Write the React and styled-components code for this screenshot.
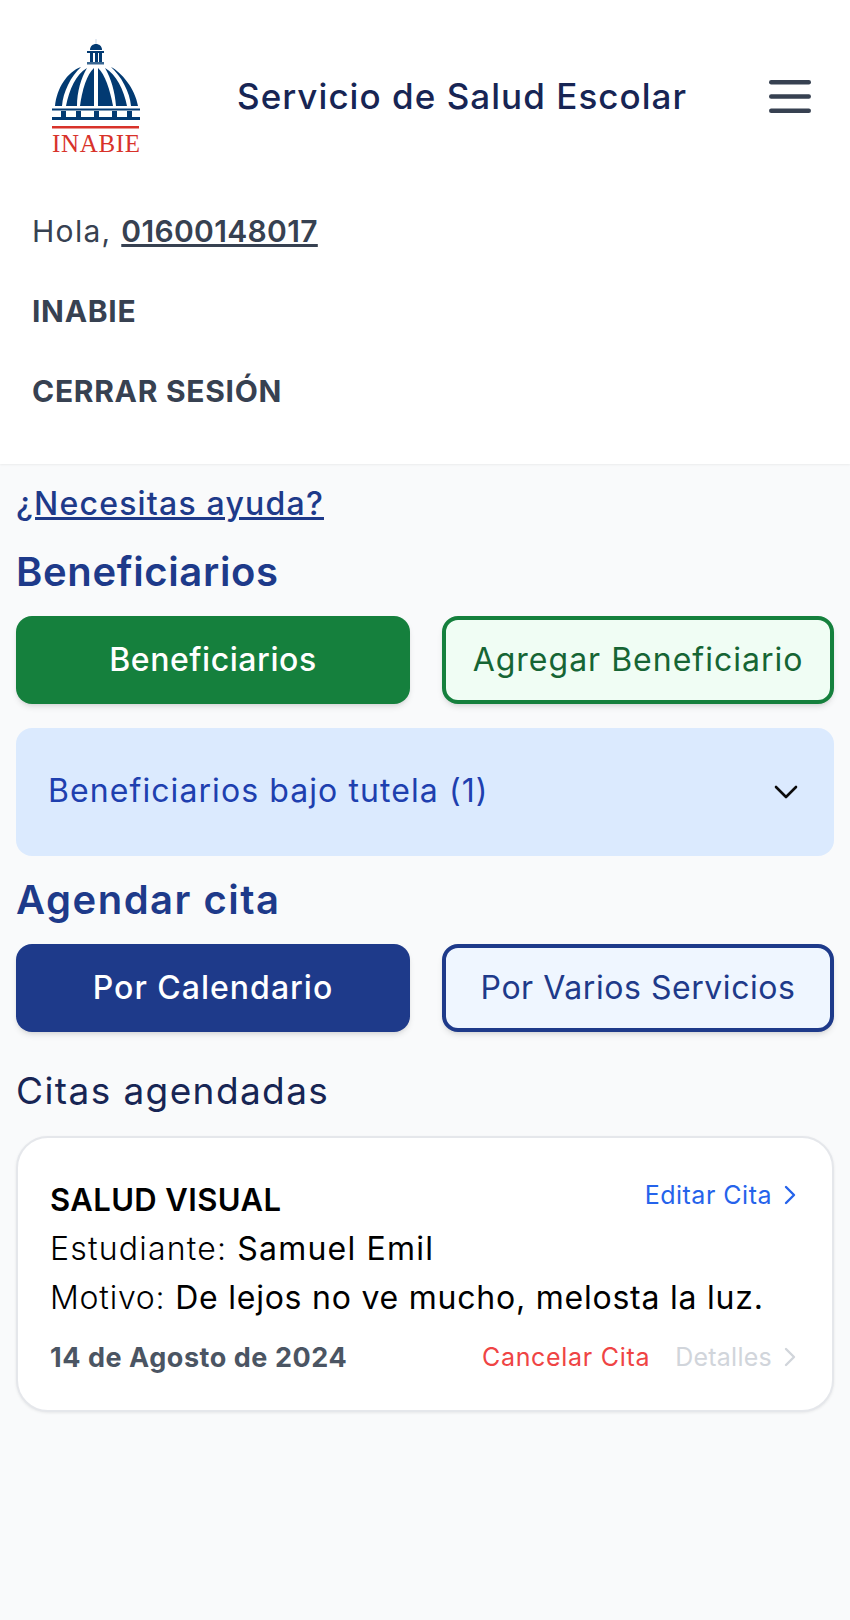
import React from 'react';
import styled, { createGlobalStyle } from 'styled-components';

const GlobalStyle = createGlobalStyle`
	html, body {
		margin: 0;
		padding: 0;
		background: #f9fafb;
		font-family: Inter, "Noto Sans", sans-serif;
	}
	* {
		box-sizing: border-box;
	}
`;

const Page = styled.div`
	width: 850px;
	min-height: 1620px;
	background: #f9fafb;
`;

const Header = styled.header`
	background: #fff;
	height: 464px;
	padding-top: 32px;
	box-shadow: 0 1px 2px rgba(0, 0, 0, 0.06);
`;

const TopBar = styled.div`
	display: flex;
	align-items: center;
	height: 128px;
	padding: 0 39px 0 52px;
`;

const Title = styled.div`
	margin-left: 97px;
	font-size: 35px;
	font-weight: 500;
	letter-spacing: 1.04px;
	color: #172554;
	white-space: nowrap;
`;

const MenuButton = styled.button`
	margin-left: auto;
	padding: 0;
	border: 0;
	background: none;
	display: flex;
`;

const NavList = styled.nav`
	display: flex;
	flex-direction: column;
	padding: 31px 0 0 32px;
`;

const NavItem = styled.div`
	height: 80px;
	font-size: 30px;
	line-height: 80px;
	letter-spacing: ${(props) => (props.$bold ? 0.7 : 1.3)}px;
	font-weight: ${(props) => (props.$bold ? 700 : 400)};
	color: #374151;
`;

const UserLink = styled.a`
	font-weight: 600;
	letter-spacing: 0.33px;
	text-decoration: underline;
`;

const Content = styled.main`
	padding: 0 16px;
`;

const HelpLink = styled.a`
	display: block;
	padding-top: 15px;
	font-size: 32px;
	line-height: 49px;
	letter-spacing: 1.2px;
	font-weight: 500;
	color: #1e3a8a;
	text-decoration: underline;
`;

const SectionTitle = styled.h2`
	margin: 18px 0 0;
	font-size: 40px;
	line-height: 52px;
	letter-spacing: ${(props) => props.$spacing}px;
	font-weight: 600;
	color: #1e3a8a;
`;

const ButtonRow = styled.div`
	display: grid;
	grid-template-columns: 394px 392px;
	justify-content: space-between;
	margin-top: 18px;
`;

const ActionButton = styled.button`
	height: 88px;
	border-radius: 16px;
	font-family: inherit;
	font-size: 32px;
	letter-spacing: ${(props) => props.$spacing}px;
	font-weight: ${(props) => (props.$solid ? 500 : 400)};
	white-space: nowrap;
	padding: 0 0 2px;
	box-shadow: 0 4px 6px -1px rgba(0, 0, 0, 0.1), 0 2px 4px -2px rgba(0, 0, 0, 0.1);
	border: ${(props) => (props.$solid ? 0 : `4px solid ${props.$tone}`)};
	background: ${(props) => (props.$solid ? props.$tone : props.$tint)};
	color: ${(props) => (props.$solid ? '#fff' : props.$ink)};
`;

const Accordion = styled.div`
	display: flex;
	align-items: center;
	justify-content: space-between;
	height: 128px;
	margin-top: 24px;
	padding: 0 36px 0 32px;
	background: #dbeafe;
	border-radius: 16px;
	font-size: 32px;
	letter-spacing: 1.08px;
	color: #1e40af;
`;

const AccordionLabel = styled.span`
	margin-bottom: 4px;
`;

const AppointmentsTitle = styled.h3`
	margin: 37px 0 23px;
	font-size: 37px;
	line-height: 44px;
	letter-spacing: 1.4px;
	font-weight: 400;
	color: #172554;
`;

const Card = styled.article`
	height: 276px;
	padding: 42px 35px 0 32px;
	background: #fff;
	border: 2px solid #e5e7eb;
	border-radius: 32px;
	box-shadow: 0 1px 3px rgba(0, 0, 0, 0.08);
`;

const CardRow = styled.div`
	display: flex;
	align-items: ${(props) => props.$align || 'center'};
	justify-content: space-between;
	height: ${(props) => props.$height}px;
	margin-top: ${(props) => props.$top || 0}px;
`;

const ServiceName = styled.div`
	font-size: 31px;
	line-height: 40px;
	font-weight: 600;
	letter-spacing: 0.4px;
	color: #000;
`;

const CardLine = styled.div`
	font-size: 32px;
	line-height: 49px;
	letter-spacing: ${(props) => props.$spacing}px;
	color: #000;
	white-space: nowrap;

	span {
		font-weight: 300;
	}
`;

const DateText = styled.div`
	font-size: 27px;
	font-weight: 700;
	letter-spacing: 0.55px;
	color: #4b5563;
`;

const CardLinks = styled.div`
	display: flex;
	align-items: center;
	gap: 25px;
`;

const CardLink = styled.a`
	display: flex;
	align-items: center;
	gap: 11px;
	font-size: 25px;
	line-height: 30px;
	letter-spacing: ${(props) => props.$spacing}px;
	color: ${(props) => props.$color};
`;

const Logo = () => (
	<svg width="88" height="128" viewBox="52 32 88 128">
		<g fill="#023a72">
			<rect x="95.5" y="39" width="1" height="5" fill="#c9d8e8" />
			<path d="M90 50 C90 46 93 44 96 44 C99 44 102 46 102 50 Z" />
			<rect x="87" y="51" width="17" height="2" />
			<rect x="90" y="53" width="3" height="9" />
			<rect x="95" y="53" width="3" height="9" />
			<rect x="99" y="53" width="3" height="9" />
			<rect x="87" y="62" width="17" height="2.5" fill="#3a6792" />
			<path d="M81 67 C67 72 57 88 55 106 H62 C63 92 71 76 81 67 Z" />
			<path d="M87 68 C76 74 69 90 66 106 H77 C77 92 81 78 87 68 Z" />
			<path d="M94 68 C87 74 82 90 80 106 H94 Z" />
			<path d="M98 68 C105 74 110 90 113 106 H98 Z" />
			<path d="M105 68 C111 78 115 92 116 106 H127 C124 90 116 74 105 68 Z" />
			<path d="M111 67 C121 72 135 88 138 106 H131 C130 92 121 76 111 67 Z" />
			<rect x="52" y="108.5" width="88" height="2" />
			<rect x="61" y="111" width="5" height="6" />
			<rect x="76" y="111" width="5" height="6" />
			<rect x="94" y="111" width="5" height="6" />
			<rect x="112" y="111" width="5" height="6" />
			<rect x="127" y="111" width="5" height="6" />
			<rect x="52" y="117" width="88" height="3" />
		</g>
		<rect x="52" y="126" width="87" height="2.5" fill="#d8322a" />
		<text
			x="52"
			y="152"
			textLength="88"
			lengthAdjust="spacing"
			fontFamily="Liberation Serif, serif"
			fontSize="25"
			fill="#d8322a"
		>
			INABIE
		</text>
	</svg>
);

const Burger = () => (
	<svg width="42" height="33" viewBox="0 0 42 33" fill="none" stroke="#374151" strokeWidth="4.4" strokeLinecap="round">
		<path d="M2.2 2.2 H39.8" />
		<path d="M2.2 16.5 H39.8" />
		<path d="M2.2 30.8 H39.8" />
	</svg>
);

const Chevron = () => (
	<svg width="14" height="20" viewBox="0 0 14 20" fill="none" stroke="currentColor" strokeWidth="2.4" strokeLinecap="round" strokeLinejoin="round">
		<path d="M3 2 L11 10 L3 18" />
	</svg>
);

const ChevronDown = () => (
	<svg width="24" height="14" viewBox="0 0 24 14" fill="none" stroke="#0b0b0b" strokeWidth="2.6" strokeLinecap="round" strokeLinejoin="round">
		<path d="M2 2 L12 12 L22 2" />
	</svg>
);

const App = () => (
	<Page>
		<GlobalStyle />
		<Header>
			<TopBar>
				<Logo />
				<Title>Servicio de Salud Escolar</Title>
				<MenuButton>
					<Burger />
				</MenuButton>
			</TopBar>
			<NavList>
				<NavItem>
					Hola, <UserLink>01600148017</UserLink>
				</NavItem>
				<NavItem $bold>INABIE</NavItem>
				<NavItem $bold>CERRAR SESIÓN</NavItem>
			</NavList>
		</Header>
		<Content>
			<HelpLink>¿Necesitas ayuda?</HelpLink>
			<SectionTitle $spacing={0.65}>Beneficiarios</SectionTitle>
			<ButtonRow>
				<ActionButton $solid $tone="#15803d" $spacing={0.55}>Beneficiarios</ActionButton>
				<ActionButton $tone="#15803d" $tint="#f0fdf4" $ink="#166534" $spacing={1}>Agregar Beneficiario</ActionButton>
			</ButtonRow>
			<Accordion>
				<AccordionLabel>Beneficiarios bajo tutela (1)</AccordionLabel>
				<ChevronDown />
			</Accordion>
			<SectionTitle $spacing={1.5}>Agendar cita</SectionTitle>
			<ButtonRow>
				<ActionButton $solid $tone="#1e3a8a" $spacing={1}>Por Calendario</ActionButton>
				<ActionButton $tone="#1e3a8a" $tint="#eff6ff" $ink="#1e3a8a" $spacing={0.55}>Por Varios Servicios</ActionButton>
			</ButtonRow>
			<AppointmentsTitle>Citas agendadas</AppointmentsTitle>
			<Card>
				<CardRow $align="flex-start" $height={44}>
					<ServiceName>SALUD VISUAL</ServiceName>
					<CardLink $color="#2563eb" $spacing={0.5}>
						Editar Cita <Chevron />
					</CardLink>
				</CardRow>
				<CardLine $spacing={1.2}>
					<span>Estudiante:</span> Samuel Emil
				</CardLine>
				<CardLine $spacing={0.77}>
					<span>Motivo:</span> De lejos no ve mucho, melosta la luz.
				</CardLine>
				<CardRow $height={36} $top={17}>
					<DateText>14 de Agosto de 2024</DateText>
					<CardLinks>
						<CardLink $color="#ef4444" $spacing={0.7}>Cancelar Cita</CardLink>
						<CardLink $color="#d1d5db" $spacing={0.25}>
							Detalles <Chevron />
						</CardLink>
					</CardLinks>
				</CardRow>
			</Card>
		</Content>
	</Page>
);

export default App;
